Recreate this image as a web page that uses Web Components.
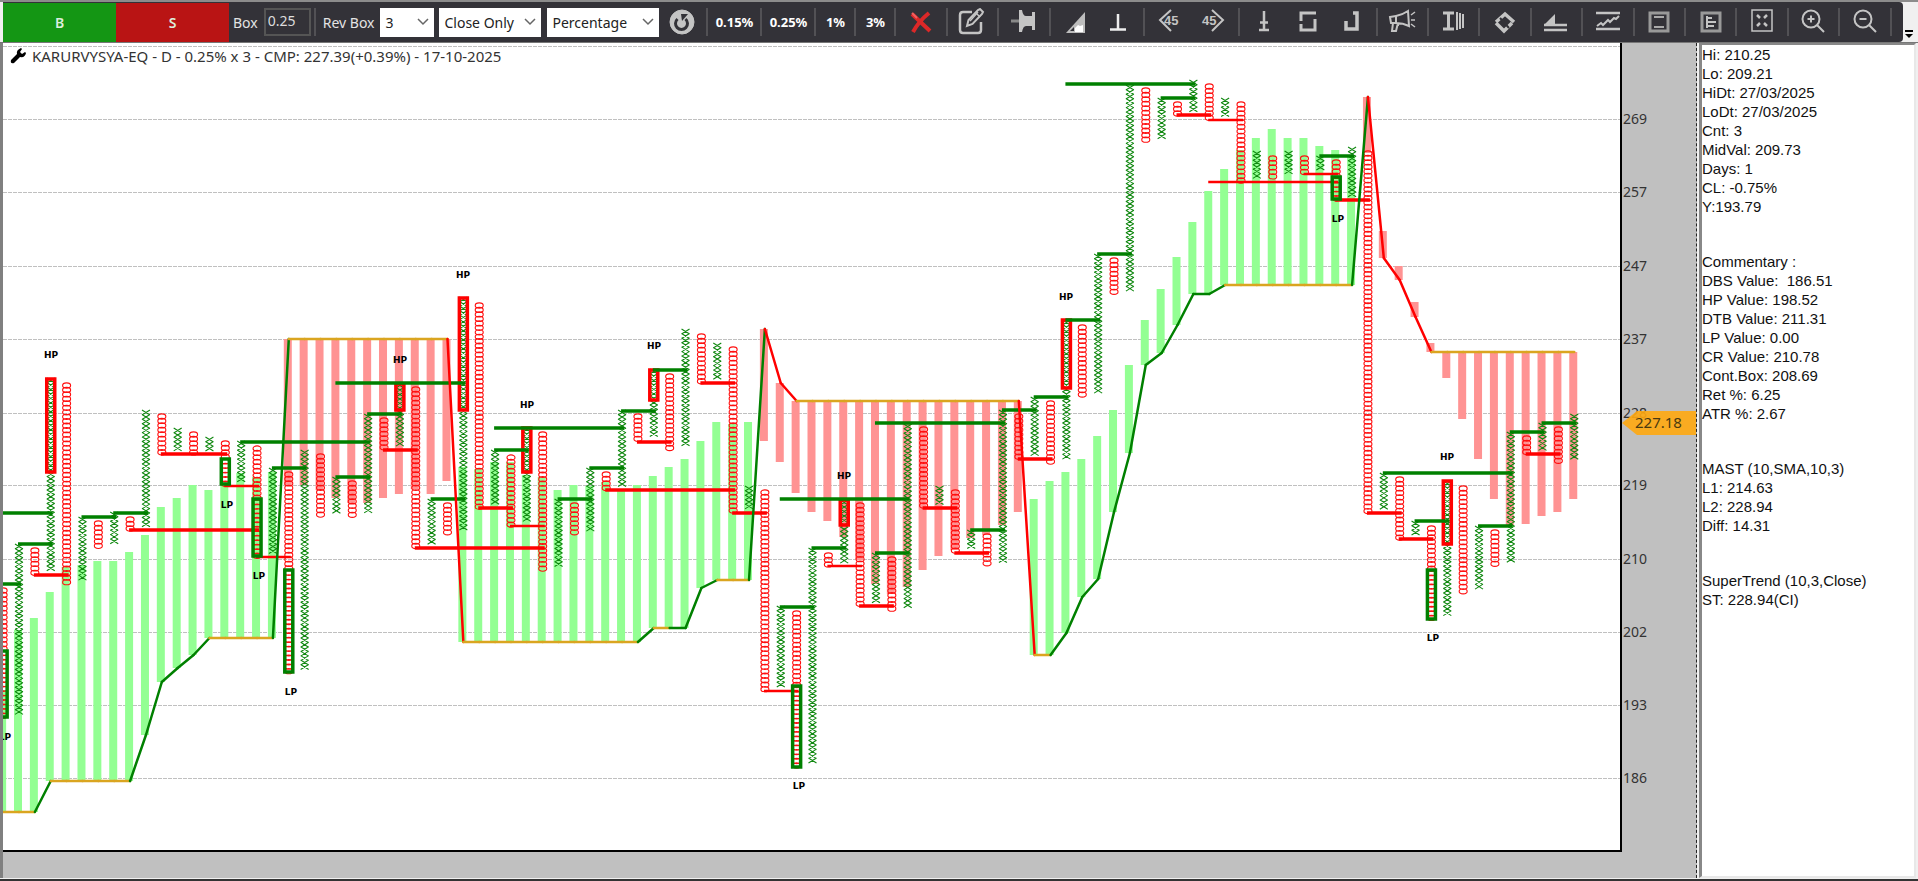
<!DOCTYPE html>
<html lang="en">
<head>
<meta charset="utf-8">
<title>KARURVYSYA-EQ - Point and Figure</title>
<style>
  body {
    margin: 0;
    font-family: "Noto Sans", "Open Sans", sans-serif;
  }
</style>
</head>
<body>
<pnf-app></pnf-app>

<script>
const ICONS = {
  reset: `<circle cx="14" cy="14" r="12" fill="#c4c4c4"/><path d="M9.5 11a6 6 0 1 0 8 0" stroke="#333238" stroke-width="3"/><path d="M13 6h7l-6 7z" fill="#333238" stroke="none"/>`,
  close: `<path d="M5 6l18 17M22 5Q12 13 6 24" stroke="#dc2828" stroke-width="4"/><path d="M5 5l5 5" stroke="#f06060" stroke-width="2"/>`,
  edit: `<path d="M14 4H5q-3 0-3 3v15q0 3 3 3h15q3 0 3-3v-8" stroke-width="2.5"/><path d="M9 18l1.5-6L20 2l2-1 3 3-1 2-9.5 10z" stroke-width="2"/><path d="M18 5l4 4M12 13l8-9" stroke-width="1.5"/>`,
  pin: `<path d="M1 13h8" stroke="#888" stroke-width="3"/><path d="M9 2h3q1 6 4 6h6V4h3v18h-3v-4h-6q-3 0-4 6H9z" fill="#c4c4c4" stroke="none"/>`,
  angle: `<path d="M5 25L24 4v21z" fill="#bdbdbd" stroke="none"/><path d="M14 24v-4l3-3 2 1 3-1v7z" fill="#fff" stroke="none"/><path d="M9 23l4-4v4z" fill="#333238" stroke="none"/>`,
  perp: `<path d="M14 6v15M6 21.5h16" stroke="#eee" stroke-width="2.5"/>`,
  left45: `<path d="M15 2L4 12l11 11" stroke-width="2"/><text x="8" y="17">45</text>`,
  right45: `<path d="M13 2l11 10-11 11" stroke-width="2"/><text x="3" y="17">45</text>`,
  dagger: `<path d="M14 3v18M10 14.5h8M9 22h10" stroke-width="2.5"/>`,
  steps: `<path d="M22 5H7v8M21 11v11H7v-6" stroke-width="3"/>`,
  hook: `<path d="M16 5h4v16H9v-8" stroke-width="3.5"/>`,
  horn: `<path d="M2 9l6-1q6-1 12-5l1 15q-6-3-13-3H3zM8 8v7M5 15l-1 8h4l2-8M10 15v3" stroke-width="2"/><path d="M23 7l4-3M23 12h4M23 16l4 3" stroke-width="1.5"/>`,
  cursor: `<path d="M3 5h11M8.5 5v16M3 21h11" stroke-width="3"/><path d="M17 4v18M20 5v16M23 6v14" stroke-width="2"/>`,
  swap: `<path d="M5 14l9-8 9 8M5 15l8 8 8-8" stroke-width="3.5"/><path d="M18 20L9 10" stroke="#333238" stroke-width="2"/>`,
  level: `<path d="M2 17h23M2 22h23" stroke-width="2.5"/><path d="M2 17L13 6v11z" fill="#c4c4c4" stroke="none"/>`,
  trend: `<path d="M2 5h24M2 21h24" stroke-width="2.5"/><path d="M3 18l4-3 2 2 5-5 2 2 4-4 2 1 3-3" stroke-width="2"/>`,
  panel: `<path d="M5 5h18v18H5z" stroke="#999" stroke-width="3"/><path d="M9 9h10M9 19h10" stroke="#aaa" stroke-width="2"/>`,
  profile: `<path d="M5 5h18v18H5z" stroke="#999" stroke-width="3"/><path d="M10 8v12M10 10h5M10 14h9M10 18h7" stroke-width="2"/>`,
  fit: `<path d="M4 2h20v21H4z" stroke-width="1.5"/><path d="M9 7l3 3M19 7l-3 3M9 18l3-3M19 18l-3-3" stroke-width="2.5"/>`,
  zoomin: `<circle cx="12" cy="11" r="8.5" stroke-width="2"/><path d="M18 17l7 7M8.5 11h7M12 7.5v7" stroke-width="2"/>`,
  zoomout: `<circle cx="12" cy="11" r="8.5" stroke-width="2"/><path d="M18 17l7 7M8.5 11h7" stroke-width="2"/>`
};

class ToolIcon extends HTMLElement {
  constructor() {
    super();
    this.attachShadow({ mode: 'open' });
  }

  connectedCallback() {
    const name = this.getAttribute('name');
    this.shadowRoot.innerHTML = `
      <style>
        :host { display: block; flex: 0 0 43px; }
        button {
          display: flex;
          align-items: center;
          justify-content: center;
          width: 100%;
          height: 38px;
          padding: 0;
          border: 0;
          background: none;
        }
        text {
          font: bold 13px "Liberation Sans", sans-serif;
          fill: #c4c4c4;
          stroke: none;
        }
      </style>
      <button aria-label="${name}">
        <svg width="28" height="28" viewBox="0 0 28 28" fill="none" stroke="#c4c4c4">${ICONS[name]}</svg>
      </button>
    `;
  }
}

class ToolSelect extends HTMLElement {
  constructor() {
    super();
    this.attachShadow({ mode: 'open' });
  }

  connectedCallback() {
    this.shadowRoot.innerHTML = `
      <style>
        :host { display: block; }
        div { display: grid; align-items: center; }
        select, svg { grid-area: 1 / 1; }
        select {
          appearance: none;
          width: 100%;
          height: 29px;
          padding: 0 4px;
          border: 1px solid #fff;
          border-radius: 0;
          background: #fff;
          color: #222;
          font: 14px "Noto Sans", "Open Sans", sans-serif;
        }
        svg { justify-self: end; margin-right: 4px; pointer-events: none; }
      </style>
      <div>
        <select aria-label="${this.getAttribute('label')}">
          <option>${this.getAttribute('value')}</option>
        </select>
        <svg width="14" height="8" fill="none" stroke="#666" stroke-width="1.5"><path d="M2 1l5 5 5-5"/></svg>
      </div>
    `;
  }
}

class ToolBar extends HTMLElement {
  constructor() {
    super();
    this.attachShadow({ mode: 'open' });
  }

  connectedCallback() {
    const sep = '<i></i>';
    const icons = list => list.map(group =>
      group.map(name => `<tool-icon name="${name}"></tool-icon>`).join('') + sep).join('');
    this.shadowRoot.innerHTML = `
      <style>
        :host {
          display: flex;
          background: #f0f0f0;
          border-top: 2px solid #8c8c8c;
          border-bottom: 1px solid #777;
          padding-left: 3px;
        }
        .tools {
          flex: 1;
          display: flex;
          align-items: center;
          min-width: 0;
          height: 40px;
          background: #333238;
          border-radius: 0 4px 4px 0;
          color: #e4e4e4;
          font-size: 14px;
          overflow: hidden;
        }
        .side {
          flex: 0 0 113px;
          height: 39px;
          border: 0;
          background: #149614;
          color: #ddeedd;
          font: 600 14px "Noto Sans", sans-serif;
        }
        .side.sell { background: #b91414; }
        label { margin: 0 6px 0 4px; white-space: nowrap; }
        input {
          box-sizing: border-box;
          width: 47px;
          height: 28px;
          padding: 0 2px 4px;
          border: 2px solid #555;
          background: #333238;
          color: #ddd;
          font: 14px "Noto Sans", sans-serif;
        }
        tool-select { flex: none; }
        .rev { width: 54px; margin-right: 5px; }
        .price { width: 102px; margin-right: 6px; }
        .unit { width: 112px; margin-right: 1px; }
        i {
          flex: 0 0 2px;
          height: 28px;
          margin: 0 3px;
          background: #525155;
        }
        .pct {
          flex: 0 0 46px;
          padding: 0;
          border: 0;
          background: none;
          color: #fff;
          font: bold 13px "Noto Sans", sans-serif;
        }
        .pct.short { flex-basis: 32px; }
        .icons {
          flex: 1;
          display: flex;
          align-items: center;
          justify-content: space-between;
          padding-right: 8px;
        }
        .more {
          display: flex;
          flex: 0 0 12px;
          align-items: flex-end;
          padding: 0 0 4px 2px;
          margin-right: 3px;
          border: 0;
          background: #f0f0f0;
        }
      </style>
      <div class="tools">
        <button class="side">B</button>
        <button class="side sell">S</button>
        <label for="box">Box</label>
        <input id="box" value="0.25">
        ${sep}
        <label>Rev Box</label>
        <tool-select class="rev" label="Rev Box" value="3"></tool-select>
        <tool-select class="price" label="Price" value="Close Only"></tool-select>
        <tool-select class="unit" label="Box type" value="Percentage"></tool-select>
        <tool-icon name="reset"></tool-icon>
        ${sep}
        <button class="pct">0.15%</button>${sep}
        <button class="pct">0.25%</button>${sep}
        <button class="pct short">1%</button>${sep}
        <button class="pct short">3%</button>${sep}
        <div class="icons">
          ${icons([['close'], ['edit'], ['pin'], ['angle', 'perp'], ['left45', 'right45'],
            ['dagger', 'steps', 'hook'], ['horn'], ['cursor'], ['swap'], ['level'], ['trend'],
            ['panel'], ['profile'], ['fit'], ['zoomin'], ['zoomout']])}
        </div>
      </div>
      <button class="more" aria-label="More tools">
        <svg width="8" height="8"><path d="M0 0h8v2H0zM0 4h8l-4 4z"/></svg>
      </button>
    `;
  }
}

// one row per column, from column -1: symbol, top, bottom, end of the histogram bar, trend line
const COLUMNS = [
  ['O', 588, 717, 690, 812], ['X', 544, 714, 630, 812], ['O', 548, 576, 618, 812], ['X', 378, 571, 592, 781],
  ['O', 383, 584, 567, 781], ['X', 517, 580, 565, 781], ['O', 521, 549, 561, 781], ['X', 512, 544, 561, 781],
  ['O', 517, 530, 552, 781], ['X', 410, 526, 535, 735], ['O', 414, 454, 507, 682], ['X', 428, 450, 498, 668],
  ['O', 432, 454, 485, 655], ['X', 437, 450, 490, 638], ['O', 441, 486, 486, 638], ['X', 441, 481, 473, 638],
  ['O', 446, 557, 477, 638], ['X', 468, 553, 472, 638], ['O', 472, 673, 485, 339], ['X', 450, 669, 485, 339],
  ['O', 454, 518, 490, 339], ['X', 477, 513, 498, 339], ['O', 481, 518, 503, 339], ['X', 414, 513, 503, 339],
  ['O', 418, 450, 498, 339], ['X', 383, 446, 494, 339], ['O', 387, 548, 489, 339], ['X', 499, 544, 494, 339],
  ['O', 503, 535, 481, 339], ['X', 297, 531, 467, 642], ['O', 303, 508, 469, 642], ['X', 450, 505, 462, 642],
  ['O', 455, 526, 462, 642], ['X', 427, 522, 475, 642], ['O', 432, 571, 477, 642], ['X', 499, 567, 490, 642],
  ['O', 503, 535, 485, 642], ['X', 468, 531, 486, 642], ['O', 472, 491, 482, 642], ['X', 410, 486, 490, 642],
  ['O', 414, 442, 485, 642], ['X', 369, 437, 476, 628], ['O', 374, 450, 467, 628], ['X', 329, 446, 459, 628],
  ['O', 334, 383, 441, 588], ['X', 343, 379, 422, 580], ['O', 347, 513, 424, 580], ['X', 486, 508, 422, 580],
  ['O', 490, 691, 441, 329], ['X', 606, 687, 462, 383], ['O', 611, 767, 493, 401], ['X', 548, 763, 512, 401],
  ['O', 553, 566, 521, 401], ['X', 500, 562, 537, 401], ['O', 503, 606, 560, 401], ['X', 553, 602, 584, 401],
  ['O', 557, 611, 594, 401], ['X', 424, 607, 587, 401], ['O', 427, 508, 570, 401], ['X', 486, 503, 556, 401],
  ['O', 490, 553, 550, 401], ['X', 530, 548, 538, 401], ['O', 534, 566, 535, 401], ['X', 410, 562, 525, 401],
  ['O', 414, 459, 512, 401], ['X', 397, 454, 499, 655], ['O', 401, 463, 481, 655], ['X', 320, 459, 472, 633],
  ['O', 325, 397, 459, 597], ['X', 254, 392, 436, 579], ['O', 258, 294, 410, 512], ['X', 85, 289, 365, 453],
  ['O', 88, 142, 320, 365], ['X', 98, 138, 289, 353], ['O', 102, 115, 257, 325], ['X', 80, 111, 222, 294],
  ['O', 84, 120, 191, 294], ['X', 98, 116, 169, 285], ['O', 102, 182, 150, 285], ['X', 151, 178, 138, 285],
  ['O', 156, 178, 129, 285], ['X', 151, 173, 138, 285], ['O', 156, 174, 138, 285], ['X', 156, 169, 146, 285],
  ['O', 160, 201, 150, 285], ['X', 147, 196, 157, 285], ['O', 151, 513, 153, 97], ['X', 473, 508, 231, 258],
  ['O', 477, 539, 266, 280], ['X', 521, 535, 302, 317], ['O', 526, 620, 343, 352], ['X', 481, 616, 378, 352],
  ['O', 486, 594, 419, 352], ['X', 526, 589, 459, 352], ['O', 530, 566, 499, 352], ['X', 432, 562, 526, 352],
  ['O', 436, 454, 524, 352], ['X', 423, 451, 516, 352], ['O', 427, 464, 512, 352], ['X', 414, 459, 499, 352]
];

// breakout lines: from column, to column, y
const BUYS = [
  [-1, 2, 513], [0, 2, 544], [-1, 0, 584], [4, 6, 517], [6, 8, 513], [14, 22, 442], [16, 18, 468], [20, 22, 477],
  [22, 24, 414], [20, 28, 383], [26, 28, 499], [30, 32, 450], [30, 38, 428], [34, 36, 499], [36, 38, 468],
  [38, 40, 411], [40, 42, 370], [48, 56, 499], [48, 50, 607], [50, 52, 548], [54, 56, 553], [54, 62, 423],
  [60, 62, 530], [62, 64, 410], [64, 66, 397], [66, 68, 320], [66, 74, 84], [68, 70, 254], [72, 74, 98],
  [82, 84, 156], [86, 94, 473], [88, 90, 521], [92, 94, 526], [94, 96, 432], [96, 98, 423]
];
const SELLS = [
  [1, 3, 575], [7, 15, 530], [9, 13, 454], [23, 25, 450], [25, 33, 548],
  [29, 31, 508], [37, 45, 490], [39, 41, 442], [43, 45, 383], [45, 47, 513],
  [53, 55, 606], [57, 59, 508], [59, 61, 553], [63, 65, 459], [73, 75, 115],
  [83, 85, 200], [85, 87, 513], [87, 89, 539], [95, 97, 454]
];
const THIN_SELLS = [
  [13, 15, 486], [15, 17, 557], [31, 33, 526], [47, 49, 691], [51, 53, 566],
  [75, 77, 120], [75, 83, 182], [81, 83, 174]
];
// pivots: column, box top, box bottom, label, label y
const PIVOTS = [
  [-1, 650, 719, 'LP', 737], [2, 378, 474, 'HP', 355], [13, 458, 486, 'LP', 505], [15, 498, 558, 'LP', 576],
  [17, 569, 674, 'LP', 692], [24, 383, 412, 'HP', 360], [28, 297, 412, 'HP', 275], [32, 427, 474, 'HP', 405],
  [40, 369, 402, 'HP', 346], [49, 685, 769, 'LP', 786], [52, 499, 527, 'HP', 476], [66, 319, 390, 'HP', 297],
  [83, 176, 201, 'LP', 219], [89, 569, 621, 'LP', 638], [90, 480, 546, 'HP', 457]
];
const LEVELS = [[269, 119], [257, 192], [247, 266], [237, 339], [228, 413], [219, 485], [210, 559], [202, 632], [193, 705], [186, 778]];
const BOX = 4.47;
const LEFT = 3;
const TOP = 43;

const colX = i => 19 + i * 15.87;

class PnfChart extends HTMLElement {
  constructor() {
    super();
    this.attachShadow({ mode: 'open' });
  }

  connectedCallback() {
    this.shadowRoot.innerHTML = `
      <style>
        :host {
          display: block;
          position: relative;
          overflow: hidden;
          background: #fff;
          border-right: 2px solid #000;
          border-bottom: 2px solid #000;
        }
        svg { display: block; width: 100%; height: 100%; }
        text {
          font: bold 9px "DejaVu Sans", sans-serif;
          text-anchor: middle;
        }
        header {
          position: absolute;
          top: 3px;
          left: 7px;
          display: flex;
          align-items: center;
          gap: 6px;
          color: #333;
          font-size: 15px;
          line-height: 20px;
          white-space: nowrap;
        }
        header svg { width: 16px; height: 16px; }
      </style>
      <svg fill="none">
        <g transform="translate(${-LEFT} ${-TOP})">
          ${this.grid()}${this.bars()}${this.symbols()}
          ${this.lines(SELLS, 'red', 3.5)}${this.lines(THIN_SELLS, 'red', 2.5)}
          ${this.boxes()}${this.lines(BUYS, 'green', 3.5)}
          ${this.trend()}${this.labels()}
        </g>
      </svg>
      <header>
        <svg viewBox="0 0 16 16"><path d="M1 12l6-6q-1-4 4-6l1 1-2 3 2 2 3-2 1 1q-1 5-6 4l-6 6q-4 1-3-3z"/></svg>
        <span>KARURVYSYA-EQ - D - 0.25% x 3 - CMP: 227.39(+0.39%) - 17-10-2025</span>
      </header>
    `;
  }

  grid() {
    const ys = [46, ...LEVELS.map(level => level[1])];
    return `<path d="${ys.map(y => `M3 ${y}.5H2400`).join('')}" stroke="#c0c0c0" stroke-dasharray="4 1"/>`;
  }

  bars() {
    return COLUMNS.map(([, , , end, st], n) => {
      const y = Math.min(end, st);
      // after the last flip the bars stay red on either side of the line
      const color = st > end && n < 87 ? '#93ff93' : '#ff9393';
      return `<rect x="${colX(n - 1) - 5}" y="${y}" width="8" height="${Math.abs(end - st)}" fill="${color}"/>`;
    }).join('');
  }

  symbols() {
    let xs = '';
    let os = '';
    COLUMNS.forEach(([kind, top, bottom], n) => {
      const x = colX(n - 1);
      const count = Math.round((bottom - top) / BOX);
      for (let k = 0; k < count; k++) {
        const y = top + k * BOX;
        if (kind === 'X') {
          xs += `M${x - 4} ${y}l8 5m0-5l-8 5`;
        } else {
          os += `M${x - 4} ${y + 2.5}a4 2.6 0 1 1 8 0a4 2.6 0 1 1 -8 0`;
        }
      }
    });
    return `<path d="${xs}" stroke="#108810" stroke-width="1.1"/><path d="${os}" stroke="#ff1010" stroke-width="1.1"/>`;
  }

  lines(list, color, width) {
    return `<path stroke="${color}" stroke-width="${width}" d="${list.map(([a, b, y]) =>
      `M${colX(a) - 1} ${y}H${colX(b) + 2}`).join('')}"/>`;
  }

  boxes() {
    return PIVOTS.map(([i, top, bottom, kind]) =>
      `<rect x="${colX(i) - 4}" y="${top + 1}" width="8" height="${bottom - top - 3}"
        stroke="${kind === 'HP' ? 'red' : 'green'}" stroke-width="3.5"/>`).join('');
  }

  trend() {
    let out = '';
    for (let n = 1; n < COLUMNS.length; n++) {
      const a = COLUMNS[n - 1][4];
      const b = COLUMNS[n][4];
      const i = n - 1;
      let color = 'goldenrod';
      if (b < a || i === 42 || i === 75) color = 'green';
      if (b > a) color = 'red';
      out += `<path d="M${colX(i - 1)} ${a}L${colX(i)} ${b}" stroke="${color}" stroke-width="2.5" stroke-linecap="round"/>`;
    }
    return out;
  }

  labels() {
    return PIVOTS.map(([i, , , label, y]) =>
      `<text x="${Math.round(colX(i) + (label === 'LP' ? 2 : 0))}" y="${y + 3}" fill="#000">${label}</text>`).join('');
  }
}

class PriceAxis extends HTMLElement {
  constructor() {
    super();
    this.attachShadow({ mode: 'open' });
  }

  connectedCallback() {
    this.shadowRoot.innerHTML = `
      <style>
        :host { display: block; overflow: hidden; background: #c0c0c0; }
        svg { display: block; width: 100%; height: 100%; }
        text {
          font: 14px "Noto Sans", "Open Sans", sans-serif;
          fill: #333;
        }
        .last { font-size: 15px; fill: #4a3a10; }
      </style>
      <svg>
        ${LEVELS.map(([value, y]) => `<text x="1" y="${y + 5 - TOP}">${value}</text>`).join('')}
        <path d="M0 380l15-12h60v24H15z" fill="#ffa90f" fill-opacity=".9"/>
        <text class="last" x="13" y="385">227.18</text>
      </svg>
    `;
  }
}

class InfoPanel extends HTMLElement {
  constructor() {
    super();
    this.attachShadow({ mode: 'open' });
  }

  connectedCallback() {
    this.shadowRoot.innerHTML = `
      <style>
        :host {
          display: flex;
          flex-direction: column;
          gap: 36px;
          background: #fff;
          border-top: 2px solid #888;
          border-left: 3px solid #888;
          border-right: 2px solid #e8e8e8;
          border-bottom: 2px solid #e8e8e8;
          color: #111;
          font-family: "Liberation Sans", sans-serif;
          font-size: 15px;
          line-height: 19px;
          white-space: pre;
        }
      </style>
      <slot></slot>
    `;
  }
}

class PnfApp extends HTMLElement {
  constructor() {
    super();
    this.attachShadow({ mode: 'open' });
  }

  connectedCallback() {
    this.shadowRoot.innerHTML = `
      <style>
        :host {
          display: grid;
          grid-template-rows: auto 1fr;
          box-sizing: border-box;
          height: 100vh;
          background: #f0f0f0;
          border-bottom: 2px solid #333;
        }
        main {
          display: grid;
          grid-template-columns: 1fr 217px;
          gap: 2px;
          min-height: 0;
          padding: 0 2px 1px 0;
        }
        .plot {
          display: grid;
          grid-template-columns: 1fr 74px;
          grid-template-rows: 1fr 26px;
          min-width: 0;
          background: #c0c0c0;
          border-left: 3px solid #808080;
          border-right: 1px dashed #222;
        }
      </style>
      <tool-bar></tool-bar>
      <main>
        <div class="plot">
          <pnf-chart></pnf-chart>
          <price-axis></price-axis>
        </div>
        <info-panel>
          <div>Hi: 210.25
Lo: 209.21
HiDt: 27/03/2025
LoDt: 27/03/2025
Cnt: 3
MidVal: 209.73
Days: 1
CL: -0.75%
Y:193.79</div>
          <div>Commentary :
DBS Value:  186.51
HP Value: 198.52
DTB Value: 211.31
LP Value: 0.00
CR Value: 210.78
Cont.Box: 208.69
Ret %: 6.25
ATR %: 2.67</div>
          <div>MAST (10,SMA,10,3)
L1: 214.63
L2: 228.94
Diff: 14.31</div>
          <div>SuperTrend (10,3,Close)
ST: 228.94(CI)</div>
        </info-panel>
      </main>
    `;
  }
}

customElements.define('tool-icon', ToolIcon);
customElements.define('tool-select', ToolSelect);
customElements.define('tool-bar', ToolBar);
customElements.define('pnf-chart', PnfChart);
customElements.define('price-axis', PriceAxis);
customElements.define('info-panel', InfoPanel);
customElements.define('pnf-app', PnfApp);
</script>
</body>
</html>
